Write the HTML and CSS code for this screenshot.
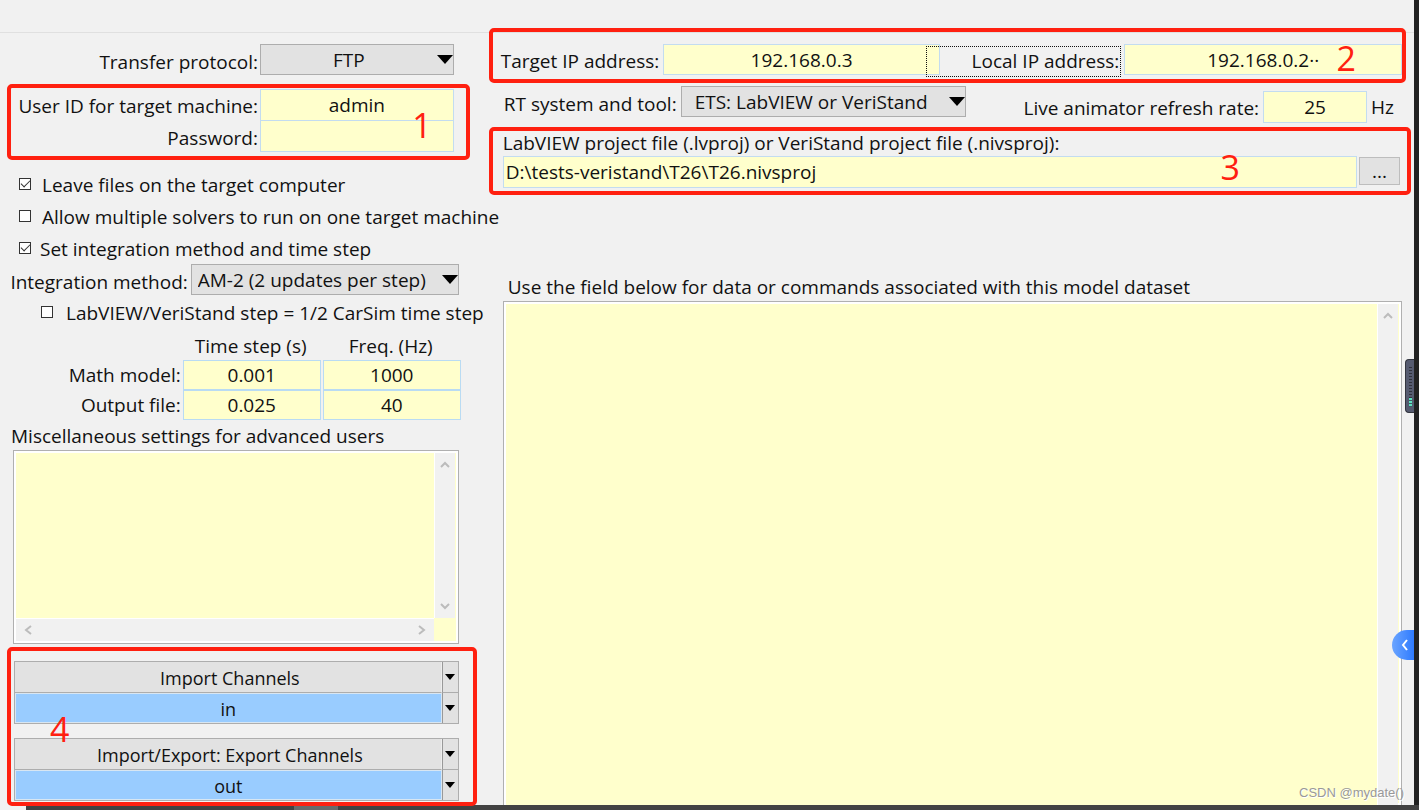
FILE: index.html
```html
<!DOCTYPE html>
<html lang="en">
<head>
<meta charset="utf-8">
<title>CarSim RT Model</title>
<link rel="stylesheet" href="styles.css">
</head>
<body>
<div class="screen">
  <div class="toolbar"></div>
  <main class="main">
    <section class="left">
      <div class="protocol">
        <label class="label" for="protocol">Transfer protocol:</label>
        <div class="drop">
          <select id="protocol" class="select centered"><option>FTP</option></select>
          <svg class="drop-arrow" viewBox="0 0 16 9"><path d="M0 0H16L8 9Z"/></svg>
        </div>
      </div>

      <div class="marked login">
        <label class="label" for="user">User ID for target machine:</label>
        <input id="user" class="field" type="text" value="admin">
        <label class="label" for="pass">Password:</label>
        <input id="pass" class="field" type="password">
        <span class="mark mark-1">1</span>
      </div>

      <div class="checks">
        <label class="check"><input type="checkbox" checked><span>Leave files on the target computer</span></label>
        <label class="check"><input type="checkbox"><span>Allow multiple solvers to run on one target machine</span></label>
        <label class="check near"><input type="checkbox" checked><span>Set integration method and time step</span></label>
      </div>

      <div class="method">
        <label class="label" for="method">Integration method:</label>
        <div class="drop">
          <select id="method" class="select"><option>AM-2 (2 updates per step)</option></select>
          <svg class="drop-arrow" viewBox="0 0 16 9"><path d="M0 0H16L8 9Z"/></svg>
        </div>
      </div>

      <label class="check inner"><input type="checkbox"><span>LabVIEW/VeriStand step = 1/2 CarSim time step</span></label>

      <table class="steps">
        <thead>
          <tr><td></td><th id="ts" scope="col">Time step (s)</th><th id="fr" scope="col">Freq. (Hz)</th></tr>
        </thead>
        <tbody>
          <tr>
            <th id="mm" scope="row">Math model:</th>
            <td><input class="field" type="text" aria-labelledby="mm ts" value="0.001"></td>
            <td><input class="field" type="text" aria-labelledby="mm fr" value="1000"></td>
          </tr>
          <tr>
            <th id="of" scope="row">Output file:</th>
            <td><input class="field" type="text" aria-labelledby="of ts" value="0.025"></td>
            <td><input class="field" type="text" aria-labelledby="of fr" value="40"></td>
          </tr>
        </tbody>
      </table>

      <label class="label misc-label" for="misc">Miscellaneous settings for advanced users</label>
      <div class="editor misc">
        <textarea id="misc" class="text"></textarea>
        <div class="bar vertical">
          <svg class="chev" viewBox="0 0 10 10"><path d="M1 7L5 3L9 7"/></svg>
          <svg class="chev" viewBox="0 0 10 10"><path d="M1 3L5 7L9 3"/></svg>
        </div>
        <div class="bar horizontal">
          <svg class="chev" viewBox="0 0 10 10"><path d="M8 1L3 5L8 9"/></svg>
          <svg class="chev" viewBox="0 0 10 10"><path d="M2 1L7 5L2 9"/></svg>
        </div>
      </div>

      <div class="marked channels">
        <div class="link">
          <button class="name" type="button">Import Channels</button>
          <button class="more" type="button" aria-label="Import options"><svg class="tri" viewBox="0 0 10 6"><path d="M0 0H10L5 6Z"/></svg></button>
          <button class="name value" type="button">in</button>
          <button class="more" type="button" aria-label="Import dataset"><svg class="tri" viewBox="0 0 10 6"><path d="M0 0H10L5 6Z"/></svg></button>
        </div>
        <div class="link">
          <button class="name" type="button">Import/Export: Export Channels</button>
          <button class="more" type="button" aria-label="Export options"><svg class="tri" viewBox="0 0 10 6"><path d="M0 0H10L5 6Z"/></svg></button>
          <button class="name value" type="button">out</button>
          <button class="more" type="button" aria-label="Export dataset"><svg class="tri" viewBox="0 0 10 6"><path d="M0 0H10L5 6Z"/></svg></button>
        </div>
        <span class="mark mark-4">4</span>
      </div>
    </section>

    <section class="right">
      <div class="marked addresses">
        <label class="label" for="target">Target IP address:</label>
        <input id="target" class="field" type="text" value="192.168.0.3">
        <label class="label focused" for="local">Local IP address:</label>
        <input id="local" class="field" type="text" value="192.168.0.2··">
        <span class="mark mark-2">2</span>
      </div>

      <div class="system">
        <label class="label" for="tool">RT system and tool:</label>
        <div class="drop">
          <select id="tool" class="select"><option>ETS: LabVIEW or VeriStand</option></select>
          <svg class="drop-arrow" viewBox="0 0 16 9"><path d="M0 0H16L8 9Z"/></svg>
        </div>
        <div class="rate">
          <label class="label" for="rate">Live animator refresh rate:</label>
          <input id="rate" class="field" type="text" value="25">
          <span>Hz</span>
        </div>
      </div>

      <div class="marked project">
        <label class="label" for="project">LabVIEW project file (.lvproj) or VeriStand project file (.nivsproj):</label>
        <div class="path">
          <input id="project" class="field" type="text" value="D:\tests-veristand\T26\T26.nivsproj">
          <button class="browse" type="button">...</button>
        </div>
        <span class="mark mark-3">3</span>
      </div>

      <label class="label data-label" for="data">Use the field below for data or commands associated with this model dataset</label>
      <div class="editor data">
        <textarea id="data" class="text"></textarea>
        <div class="bar vertical">
          <svg class="chev" viewBox="0 0 10 10"><path d="M1 7L5 3L9 7"/></svg>
        </div>
      </div>
    </section>
  </main>
  <div class="meter"><i class="idle"></i><i class="level"></i></div>
  <button class="expand" type="button" aria-label="Expand panel"><svg viewBox="0 0 8 12"><path d="M6 1L2 6L6 11"/></svg></button>
  <span class="credit">CSDN @mydate()</span>
</div>
<div class="taskbar"><i class="active"></i></div>
</body>
</html>
```
FILE: styles.css
```css
* { box-sizing: border-box; }

body {
  margin: 0;
  min-height: 100vh;
  display: flex;
  flex-direction: column;
  background: #f1f1f1;
  color: #111;
  font: 19px/24px "Open Sans", "Noto Sans", sans-serif;
}

button, input, select, textarea { font: inherit; color: inherit; margin: 0; border-radius: 0; }

.screen {
  position: relative;
  flex: 1;
  display: flex;
  flex-direction: column;
  border-right: 5px solid #222;
}

.toolbar { height: 33px; border-bottom: 1px solid #e0e0e0; }

.main {
  flex: 1;
  display: grid;
  grid-template-columns: minmax(446px, 34%) minmax(0, 1fr);
  column-gap: 8px;
}

.left, .right {
  display: flex;
  flex-direction: column;
  min-width: 0;
  padding-top: 11px;
  white-space: nowrap;
}
.right { padding-right: 12px; }

.label { display: block; }

/* Fields */
.field {
  display: block;
  width: 100%;
  min-width: 0;
  height: 32px;
  padding: 0 2px;
  border: 1px solid #c3dcf0;
  background: #ffffcc;
  text-align: center;
}

.drop { position: relative; }
.select {
  display: block;
  width: 100%;
  height: 31px;
  padding: 0 22px 0 6px;
  border: 1px solid #adadad;
  background: #e2e2e2;
  appearance: none;
}
.centered { text-align-last: center; }
.drop-arrow { position: absolute; right: 1px; top: 11px; width: 16px; height: 9px; pointer-events: none; }

.protocol, .login {
  display: grid;
  grid-template-columns: 258px 1fr;
  column-gap: 2px;
  align-items: center;
  margin-right: 27px;
}
.protocol .label, .login .label { text-align: right; }
.protocol .label, .method .label { padding-top: 4px; }
.login { margin-top: 14px; }
.login .label { padding-top: 2px; }
.login .field + .label + .field { margin-top: -1px; }

/* Highlighted groups */
.marked { position: relative; }
.marked::after {
  content: "";
  position: absolute;
  border: 4px solid #ff2010;
  border-radius: 5px;
  pointer-events: none;
}
.login::after { inset: -5px -16px -8px 7px; }
.mark {
  position: absolute;
  z-index: 1;
  color: #ff2010;
  font: 34px/40px "Open Sans", "Noto Sans", sans-serif;
}
.mark-1 { right: 22px; top: 16px; }
.mark-2 { right: 46px; top: -6px; }
.mark-3 { right: 162px; top: 17px; }
.mark-4 { left: 36px; top: 48px; }

/* Check boxes */
.checks { margin-top: 17px; }
.check { display: flex; align-items: center; gap: 11px; height: 32px; padding-left: 19px; }
.check.near { gap: 9px; }
.check.inner { padding-left: 41px; gap: 13px; height: 36px; }
.check input {
  flex: none;
  width: 12px;
  height: 12px;
  margin-bottom: 3px;
  border: 1px solid #333;
  background: #fff;
  appearance: none;
}
.check input:checked::before {
  content: "";
  display: block;
  width: 8px;
  height: 4px;
  margin: 1px;
  border-left: 1px solid #333;
  border-bottom: 1px solid #333;
  transform: rotate(-45deg);
}

.method {
  display: grid;
  grid-template-columns: auto 268px;
  column-gap: 3px;
  align-items: center;
  justify-content: end;
  margin: -1px 22px 0 0;
}

/* Step table */
.steps { margin: 1px 20px 0 0; border-collapse: collapse; table-layout: fixed; width: auto; }
.steps th { font-weight: 400; padding: 0; }
.steps thead th { height: 28px; }
.steps td { padding: 0 0 0 2px; width: 140px; }
.steps tbody th { text-align: right; }
.steps thead td { width: auto; }
.steps .field { height: 30px; border-color: #b9dbf3; }

/* Text editors with scroll bars */
.editor {
  display: grid;
  grid-template-columns: 1fr 22px;
  padding: 2px;
  border: 1px solid #b0b0b0;
  background: #ffffcc;
  box-shadow: inset 0 0 0 2px #fff;
}
.text { display: block; width: 100%; height: 100%; padding: 4px; border: 0; background: #ffffcc; resize: none; }
.bar { display: flex; justify-content: space-between; align-items: center; background: #f1f1f1; }
.vertical { flex-direction: column; padding: 7px 0; border-left: 1px solid #fff; }
.horizontal { padding: 0 7px; border-top: 1px solid #fff; }
.chev { width: 10px; height: 10px; fill: none; stroke: #bcbcbc; stroke-width: 2; }
.misc-label { margin: 4px 0 2px 11px; }
.misc { grid-template-rows: 165px 23px; margin: 0 22px 0 13px; }
.misc .vertical, .data .vertical { margin-right: 1px; }

/* Channel links */
.channels { display: grid; row-gap: 14px; margin: 17px 22px 4px 14px; font-size: 18px; }
.channels::after { inset: -14px -18px -5px -7px; z-index: 1; }
.link {
  display: grid;
  grid-template-columns: 1fr 16px;
  grid-template-rows: 31px 30px;
  border: 1px solid #adadad;
  background: #e2e2e2;
}
.link button { padding: 0; border: 0; background: #e2e2e2; }
.link .name { padding: 2px 0 0 4px; border-right: 1px solid #eee; }
.link .value { padding-left: 0; background: #99ccff; border: 1px solid #d8e6f2; }
.link .more { border-left: 1px solid #999; }
.link .name:first-child, .link .name:first-child + .more { border-bottom: 1px solid #adadad; }
.tri { display: block; width: 10px; height: 6px; margin: 0 auto; }

/* Right column */
.addresses {
  display: grid;
  grid-template-columns: 161px 1fr 182px 1fr;
  align-items: center;
  padding-left: 12px;
  column-gap: 1px;
}
.addresses::after { inset: -16px -4px -8px 0; }
.addresses .label { padding-top: 2px; }
.addresses .field { height: 31px; }
.addresses .focused {
  position: relative;
  height: 31px;
  margin: 2px 2px -2px -15px;
  padding: 2px 1px 0 0;
  border: 1px dotted #111;
  text-align: right;
}

.system { display: flex; align-items: flex-start; padding: 11px 8px 0 15px; }
.system > .label { padding: 6px 4px 0 0; }
.system .drop { width: 285px; }
.system .select { padding-left: 13px; }
.rate { display: flex; align-items: center; gap: 4px; margin: 5px 0 0 auto; }
.rate .label { padding-top: 2px; }
.rate .field { width: 104px; }

.project { margin-top: 7px; padding: 1px 2px 0 14px; }
.project::after { inset: -3px -9px -7px 0; }
.path { display: grid; grid-template-columns: 1fr 41px; column-gap: 2px; margin-top: 1px; align-items: start; }
.path .field { text-align: left; }
.browse { height: 28px; margin-top: 1px; padding: 0; border: 1px solid #bdbdbd; background: #e2e2e2; }

.data-label { margin: 87px 0 2px 19px; }
.data { flex: 1; margin-left: 14px; border-bottom: 0; padding-bottom: 0; }

/* Edge widgets */
.meter {
  position: absolute;
  right: 0;
  top: 359px;
  width: 9px;
  height: 54px;
  padding: 7px 2px 5px 3px;
  display: flex;
  flex-direction: column;
  border: 1px solid #33363f;
  border-right: 0;
  border-radius: 4px 0 0 4px;
  background: #565b70;
}
.idle { flex: 1; background: repeating-linear-gradient(#30323c 0 1px, #565b70 1px 3px); }
.level { height: 9px; background: repeating-linear-gradient(#5fe0c0 0 2px, #3d5f64 2px 3px); }

.expand {
  position: absolute;
  right: 0;
  top: 630px;
  width: 22px;
  height: 30px;
  padding: 0 5px 0 9px;
  border: 0;
  border-radius: 15px 0 0 15px;
  background: linear-gradient(90deg, #6ba5ff, #2f7bff);
}
.expand svg { display: block; width: 8px; height: 12px; fill: none; stroke: #fff; stroke-width: 2; }

.credit {
  position: absolute;
  right: 10px;
  bottom: 2px;
  color: #999;
  font: 13px/20px "Liberation Sans", sans-serif;
  text-shadow: 1px 1px 0 #fff;
}

.taskbar { height: 5px; margin-left: 26px; padding-left: 268px; background: #424242; }
.active { display: block; width: 44px; height: 5px; background: #6a6a6a; }
```
